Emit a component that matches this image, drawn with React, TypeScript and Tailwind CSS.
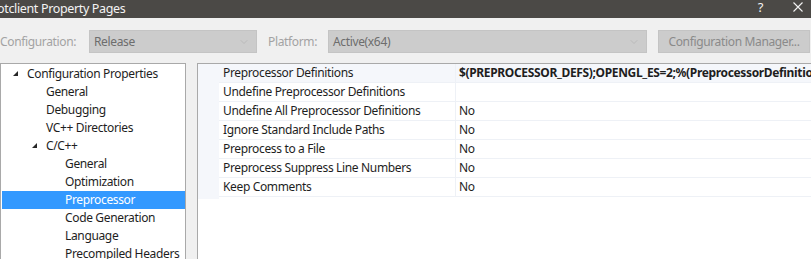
import { ChevronDown } from "lucide-react";

const font = { fontFamily: '"Noto Sans", "Open Sans", sans-serif' };

type TreeItem = { label: string; depth: number; open?: boolean; selected?: boolean };

const treeItems: TreeItem[] = [
  { label: "Configuration Properties", depth: 0, open: true },
  { label: "General", depth: 1 },
  { label: "Debugging", depth: 1 },
  { label: "VC++ Directories", depth: 1 },
  { label: "C/C++", depth: 1, open: true },
  { label: "General", depth: 2 },
  { label: "Optimization", depth: 2 },
  { label: "Preprocessor", depth: 2, selected: true },
  { label: "Code Generation", depth: 2 },
  { label: "Language", depth: 2 },
  { label: "Precompiled Headers", depth: 2 },
];

const props = [
  { name: "Preprocessor Definitions", value: "$(PREPROCESSOR_DEFS);OPENGL_ES=2;%(PreprocessorDefinitions)", bold: true },
  { name: "Undefine Preprocessor Definitions", value: "" },
  { name: "Undefine All Preprocessor Definitions", value: "No" },
  { name: "Ignore Standard Include Paths", value: "No" },
  { name: "Preprocess to a File", value: "No" },
  { name: "Preprocess Suppress Line Numbers", value: "No" },
  { name: "Keep Comments", value: "No" },
];

const indent = ["pl-[25px]", "pl-[44px]", "pl-[63px]"];
const arrowPos = ["left-[10px]", "left-[29px]", "left-[48px]"];

function OpenArrow() {
  return (
    <svg width="7" height="7" viewBox="0 0 7 7" className="block">
      <path d="M6 1 L6 6 L1 6 Z" fill="#262626" />
    </svg>
  );
}

function Select({ value, className }: { value: string; className: string }) {
  return (
    <div className={`flex h-[23px] shrink-0 items-center justify-between border border-[#c4c4c4] bg-[#cccccc] pl-[4px] pr-[6px] text-[#6d6d6d] ${className}`}>
      <span>{value}</span>
      <ChevronDown size={12} strokeWidth={1} className="text-[#a8a8a8]" />
    </div>
  );
}

export default function App() {
  return (
    <div style={font} className="h-[259px] w-[811px] overflow-hidden bg-[#f0f0f0] text-[12px] tracking-[-0.35px] text-[#1e1e1e]">
      <div className="flex h-[18px] items-center justify-between bg-[#4b4946] text-[12.5px] text-[#f3f3f3]">
        <span className="-ml-[3px] leading-none">otclient Property Pages</span>
        <div className="flex items-center gap-[30px] pr-[8px]">
          <span className="-mt-[4px] text-[13px] leading-none">?</span>
          <svg width="10" height="10" viewBox="0 0 10 10" className="-mt-[4px] block">
            <path d="M0.5 0.5 L9.5 9.5 M9.5 0.5 L0.5 9.5" stroke="#f3f3f3" strokeWidth="1.1" />
          </svg>
        </div>
      </div>

      <div className="mt-[12px] flex h-[23px] items-center whitespace-nowrap">
        <span className="w-[89px] shrink-0 text-[#a3a3a3]">Configuration:</span>
        <Select value="Release" className="w-[168px]" />
        <span className="ml-[11px] w-[60px] shrink-0 text-[#a3a3a3]">Platform:</span>
        <Select value="Active(x64)" className="w-[319px]" />
        <div className="ml-[11px] flex h-[23px] w-[152px] shrink-0 items-center justify-center border border-[#c4c4c4] bg-[#cccccc] text-[#8a8a8a]">
          Configuration Manager...
        </div>
      </div>

      <div className="mt-[10px] flex h-[200px] items-start">
        <div className="h-full w-[186px] shrink-0 overflow-hidden border-t border-r border-l border-[#a9a9a9] bg-white pt-[1px] pl-[1px]">
          {treeItems.map((item, i) => (
            <div
              key={i}
              className={`relative flex h-[18px] items-center whitespace-nowrap leading-none ${indent[item.depth]} ${item.selected ? "bg-[#3399ff] text-white" : ""}`}
            >
              {item.open && (
                <span className={`absolute top-[5px] ${arrowPos[item.depth]}`}>
                  <OpenArrow />
                </span>
              )}
              {item.label}
            </div>
          ))}
        </div>

        <div className="ml-[11px] h-full min-w-0 flex-1 overflow-hidden border-t border-l border-[#a9a9a9] bg-white">
          <div className="flex h-[135px]">
            <div className="w-[21px] shrink-0 bg-[#f5f7fb]" />
            <div className="min-w-0 flex-1">
              {props.map((p, i) => (
                <div
                  key={i}
                  className={`flex h-[19px] items-center border-b border-[#eef1f6] leading-none whitespace-nowrap ${i === 0 ? "bg-[#f5f7fb]" : ""}`}
                >
                  <div className="flex h-full w-[237px] shrink-0 items-center border-r border-[#eef1f6] pl-[4px]">
                    {p.name}
                  </div>
                  <div className={`pl-[3px] ${p.bold ? "font-bold" : ""}`}>{p.value}</div>
                </div>
              ))}
            </div>
          </div>
        </div>
      </div>
    </div>
  );
}
